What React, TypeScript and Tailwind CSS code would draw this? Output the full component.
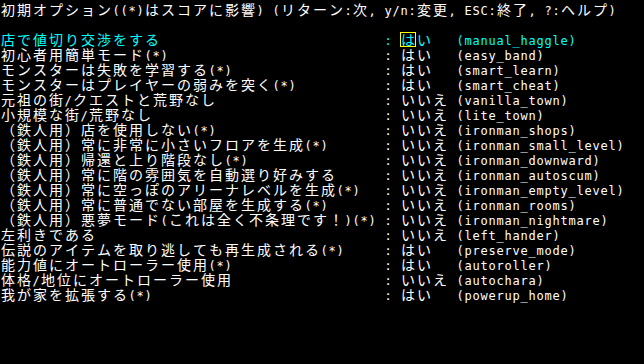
import React from "react";

const TITLE =
  "初期オプション((*)はスコアに影響) (リターン:次, y/n:変更, ESC:終了, ?:ヘルプ)";

// label, on/off, option name
const OPTIONS: [string, boolean, string][] = [
  ["店で値切り交渉をする", true, "manual_haggle"],
  ["初心者用簡単モード(*)", true, "easy_band"],
  ["モンスターは失敗を学習する(*)", true, "smart_learn"],
  ["モンスターはプレイヤーの弱みを突く(*)", true, "smart_cheat"],
  ["元祖の街/クエストと荒野なし", false, "vanilla_town"],
  ["小規模な街/荒野なし", false, "lite_town"],
  ["（鉄人用）店を使用しない(*)", false, "ironman_shops"],
  ["（鉄人用）常に非常に小さいフロアを生成(*)", false, "ironman_small_level"],
  ["（鉄人用）帰還と上り階段なし(*)", false, "ironman_downward"],
  ["（鉄人用）常に階の雰囲気を自動選り好みする", false, "ironman_autoscum"],
  ["（鉄人用）常に空っぽのアリーナレベルを生成(*)", false, "ironman_empty_level"],
  ["（鉄人用）常に普通でない部屋を生成する(*)", false, "ironman_rooms"],
  ["（鉄人用）悪夢モード(これは全く不条理です！)(*)", false, "ironman_nightmare"],
  ["左利きである", false, "left_hander"],
  ["伝説のアイテムを取り逃しても再生成される(*)", true, "preserve_mode"],
  ["能力値にオートローラー使用(*)", true, "autoroller"],
  ["体格/地位にオートローラー使用", false, "autochara"],
  ["我が家を拡張する(*)", true, "powerup_home"],
];

const isWide = (ch: string) => ch.charCodeAt(0) >= 0x1100;
const cols = (s: string) => [...s].reduce((n, c) => n + (isWide(c) ? 2 : 1), 0);
const pad = (s: string, w: number) => s + " ".repeat(Math.max(0, w - cols(s)));

function TermLine({
  text,
  color = "text-white",
  cursorAt = -1,
}: {
  text: string;
  color?: string;
  cursorAt?: number;
}) {
  return (
    <div className={`flex h-[15px] items-baseline whitespace-pre ${color}`}>
      {[...text].map((ch, i) =>
        isWide(ch) ? (
          <span
            key={i}
            className={`inline-block w-[16px] h-[15px] shrink-0 text-center leading-[15px] text-[14px] font-['Noto_Sans_CJK_JP',sans-serif] ${
              i === cursorAt ? "outline outline-1 -outline-offset-1 outline-[#ffff00]" : ""
            }`}
          >
            {ch}
          </span>
        ) : (
          <span
            key={i}
            className="inline-block w-[8px] h-[15px] shrink-0 text-center leading-[15px] text-[12px] font-['DejaVu_Sans_Mono',monospace]"
          >
            {ch}
          </span>
        )
      )}
    </div>
  );
}

export default function App() {
  return (
    <div className="w-[644px] h-[364px] overflow-hidden bg-black pt-[2px]">
      <TermLine text={TITLE} />
      <TermLine text="" />
      {OPTIONS.map(([label, on, name], idx) => {
        const value = on ? "はい  " : "いいえ";
        const line = `${pad(label, 48)}: ${value} (${name})`;
        const cursorAt = idx === 0 ? [...pad(label, 48)].length + 2 : -1;
        return (
          <TermLine
            key={name}
            text={line}
            color={idx === 0 ? "text-[#00ffff]" : "text-white"}
            cursorAt={cursorAt}
          />
        );
      })}
    </div>
  );
}
